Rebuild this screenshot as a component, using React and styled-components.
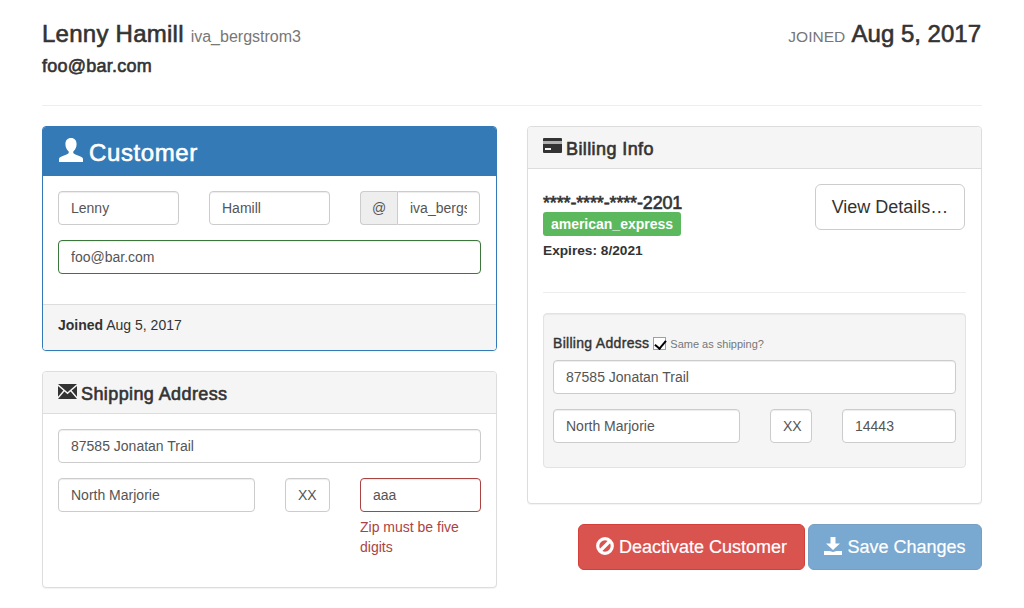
import React from 'react'
import styled, { createGlobalStyle, css } from 'styled-components'

const GlobalStyle = createGlobalStyle`
    * { box-sizing: border-box; }
    body {
        margin: 0;
        background: #fff;
        color: #333;
        font-family: "Liberation Sans", Arial, sans-serif;
        font-size: 14px;
        line-height: 20px;
    }
`

// the reference uses a medium weight, Liberation Sans only has regular and bold
const medium = css`
    font-weight: 400;
    -webkit-text-stroke: 0.6px currentColor;
`

function UserIcon() {
    return (
        <HeadIcon width="26" height="24" viewBox="0 0 26 24">
            <path fill="currentColor" d="M13 0c3.600 0 5.600 2.600 5.600 6 0 2.900-1.200 5.700-2.900 7.100-.6.5-.6 2 0 2.500.9.8 2.500 1.300 4.300 2 2.500 1 5 1.700 5 3.400V24H1v-3c0-1.700 2.500-2.400 5-3.400 1.800-.7 3.400-1.200 4.300-2 .6-.5.6-2 0-2.500C8.600 11.700 7.400 8.900 7.400 6 7.400 2.600 9.400 0 13 0z" />
        </HeadIcon>
    )
}

function EnvelopeIcon() {
    return (
        <SmallIcon width="19" height="17" viewBox="0 0 19 17">
            <path fill="currentColor" d="M0 1h19L9.500 9.200z M0 3l5.300 4.600L0 13.800z M19 3v10.800l-5.300-6.200z M6.400 8.600l3.100 2.700 3.100-2.700L19 16H0z" />
        </SmallIcon>
    )
}

function CardIcon() {
    return (
        <SmallIcon width="19" height="17" viewBox="0 0 19 17">
            <path fill="currentColor" d="M1 0h17a1 1 0 0 1 1 1v2H0V1a1 1 0 0 1 1-1z" />
            <rect y="3" width="19" height="3" fill="currentColor" opacity="0.35" />
            <path fill="currentColor" fillRule="evenodd" d="M0 6h19v8a1 1 0 0 1-1 1H1a1 1 0 0 1-1-1z M2 10v2h6v-2z" />
        </SmallIcon>
    )
}

function BanIcon() {
    return (
        <BtnIcon width="18" height="18" viewBox="0 0 18 18">
            <circle cx="9" cy="9" r="7.300" fill="none" stroke="currentColor" strokeWidth="3.200" />
            <path d="M4 14L14 4" stroke="currentColor" strokeWidth="3.200" />
        </BtnIcon>
    )
}

function DownloadIcon() {
    return (
        <BtnIcon width="18" height="18" viewBox="0 0 18 18">
            <path fill="currentColor" d="M6.500 0h5v6.500H16L9 13 2 6.500h4.500z M0 14h5.500L9 15l3.500-1H18v4H0z" />
        </BtnIcon>
    )
}

function App() {
    return (
        <Page>
            <GlobalStyle />
            <Header>
                <div>
                    <Name>Lenny Hamill <Username>iva_bergstrom3</Username></Name>
                    <HeaderEmail>foo@bar.com</HeaderEmail>
                </div>
                <JoinedLine><JoinedLabel>JOINED</JoinedLabel> Aug 5, 2017</JoinedLine>
            </Header>
            <Rule />
            <Columns>
                <Column>
                    <Panel primary>
                        <PrimaryHeading><UserIcon />Customer</PrimaryHeading>
                        <PanelBody>
                            <NameRow>
                                <Input defaultValue="Lenny" />
                                <Input defaultValue="Hamill" />
                                <InputGroup>
                                    <Addon>@</Addon>
                                    <GroupInput defaultValue="iva_bergstrom3" />
                                </InputGroup>
                            </NameRow>
                            <Input success defaultValue="foo@bar.com" />
                            <BodyGap />
                        </PanelBody>
                        <PanelFooter><strong>Joined</strong> Aug 5, 2017</PanelFooter>
                    </Panel>
                    <Panel>
                        <PanelHeading><EnvelopeIcon />Shipping Address</PanelHeading>
                        <PanelBody>
                            <Input defaultValue="87585 Jonatan Trail" />
                            <ShippingRow>
                                <Input defaultValue="North Marjorie" />
                                <StateInput defaultValue="XX" />
                                <div>
                                    <Input error defaultValue="aaa" />
                                    <ErrorText>Zip must be five digits</ErrorText>
                                </div>
                            </ShippingRow>
                        </PanelBody>
                    </Panel>
                </Column>
                <Column>
                    <Panel>
                        <PanelHeading><CardIcon />Billing Info</PanelHeading>
                        <BillingBody>
                            <CardRow>
                                <div>
                                    <CardNumber>****-****-****-2201</CardNumber>
                                    <CardLabel>american_express</CardLabel>
                                    <Expires>Expires: 8/2021</Expires>
                                </div>
                                <DetailsButton>View Details…</DetailsButton>
                            </CardRow>
                            <BodyRule />
                            <Well>
                                <AddressTitle>
                                    <AddressLabel>Billing Address</AddressLabel>
                                    <Check type="checkbox" defaultChecked />
                                    <SameText>Same as shipping?</SameText>
                                </AddressTitle>
                                <Input defaultValue="87585 Jonatan Trail" />
                                <BillingRow>
                                    <Input defaultValue="North Marjorie" />
                                    <StateInput defaultValue="XX" />
                                    <Input defaultValue="14443" />
                                </BillingRow>
                            </Well>
                        </BillingBody>
                    </Panel>
                    <Actions>
                        <DangerButton><BanIcon />Deactivate Customer</DangerButton>
                        <SaveButton disabled><DownloadIcon />Save Changes</SaveButton>
                    </Actions>
                </Column>
            </Columns>
        </Page>
    )
}

export default App

const Page = styled.div`
    width: 1024px;
    padding: 20px 42px 0;
`
const Header = styled.header`
    display: flex;
    justify-content: space-between;
    align-items: flex-start;
`
const Name = styled.h3`
    margin: 0;
    font-size: 24px;
    line-height: 27px;
    letter-spacing: 0.25px;
    ${medium}
`
const Username = styled.small`
    font-size: 16px;
    font-weight: 400;
    letter-spacing: 0;
    color: #777;
    -webkit-text-stroke: 0;
`
const HeaderEmail = styled.div`
    margin-top: 6px;
    font-size: 18px;
    line-height: 20px;
    letter-spacing: 0.25px;
    ${medium}
`
const JoinedLine = styled.div`
    padding-right: 1px;
    font-size: 24px;
    line-height: 27px;
    ${medium}
`
const JoinedLabel = styled.small`
    margin-right: 1px;
    font-size: 15.500px;
    color: #777;
    -webkit-text-stroke: 0;
`
const Rule = styled.hr`
    margin: 29px 0 20px;
    border: 0;
    border-top: 1px solid #eee;
`
const Columns = styled.div`
    display: grid;
    grid-template-columns: 455px 455px;
    gap: 30px;
`
const Column = styled.div`
    display: flex;
    flex-direction: column;
`
const Panel = styled.section`
    margin-bottom: 20px;
    background: #fff;
    border: 1px solid ${(props) => (props.primary ? '#337ab7' : '#ddd')};
    border-radius: 4px;
    box-shadow: 0 1px 1px rgba(0, 0, 0, 0.05);
`
const PanelHeading = styled.h3`
    display: flex;
    align-items: center;
    gap: 4px;
    height: 42px;
    margin: 0;
    padding: 2px 15px 0;
    font-size: 18px;
    line-height: 20px;
    letter-spacing: 0.4px;
    color: #333;
    background: #f5f5f5;
    border-bottom: 1px solid #ddd;
    border-radius: 3px 3px 0 0;
    ${medium}
`
const PrimaryHeading = styled(PanelHeading)`
    gap: 5px;
    height: 49px;
    font-size: 24px;
    letter-spacing: 0.6px;
    color: #fff;
    background: #337ab7;
    border-bottom: 0;
`
const HeadIcon = styled.svg`
    flex: none;
    margin-top: -6px;
`
const SmallIcon = styled.svg`
    flex: none;
    margin-top: -5px;
`
const BtnIcon = styled.svg`
    flex: none;
    margin-top: -3px;
`
const PanelBody = styled.div`
    padding: 15px;
`
const BillingBody = styled(PanelBody)`
    padding-bottom: 35px;
`
const PanelFooter = styled.div`
    height: 46px;
    padding: 10px 15px;
    background: #f5f5f5;
    border-top: 1px solid #ddd;
    border-radius: 0 0 3px 3px;
`
const Input = styled.input`
    display: block;
    width: 100%;
    min-width: 0;
    height: 34px;
    padding: 6px 12px;
    font-family: inherit;
    font-size: 14px;
    line-height: 20px;
    color: #555;
    background: #fff;
    border: 1px solid ${(props) => (props.success ? '#3c763d' : props.error ? '#a94442' : '#ccc')};
    border-radius: 4px;
    box-shadow: inset 0 1px 1px rgba(0, 0, 0, 0.075);
    outline: 0;
`
const StateInput = styled(Input)`
    padding-right: 0;
`
const NameRow = styled.div`
    display: grid;
    grid-template-columns: 121px 121px 120px;
    gap: 30px;
    margin-bottom: 15px;
`
const InputGroup = styled.div`
    display: flex;
`
const Addon = styled.span`
    flex: none;
    width: 37px;
    height: 34px;
    font-size: 14px;
    line-height: 32px;
    text-align: center;
    color: #555;
    background: #eee;
    border: 1px solid #ccc;
    border-right: 0;
    border-radius: 4px 0 0 4px;
`
const GroupInput = styled(Input)`
    flex: 1;
    border-radius: 0 4px 4px 0;
`
const BodyGap = styled.div`
    height: 15px;
`
const ShippingRow = styled.div`
    display: grid;
    grid-template-columns: 197px 45px 121px;
    gap: 30px;
    margin-top: 15px;
`
const ErrorText = styled.div`
    margin-top: 5px;
    margin-bottom: 15px;
    color: #a94442;
`
const CardRow = styled.div`
    display: flex;
    justify-content: space-between;
    align-items: flex-start;
`
const CardNumber = styled.div`
    margin-top: 9px;
    font-size: 18px;
    line-height: 20px;
    letter-spacing: -0.15px;
    ${medium}
`
const CardLabel = styled.span`
    display: block;
    width: 138px;
    height: 24px;
    margin-top: -1px;
    font-size: 14px;
    font-weight: 700;
    line-height: 24px;
    text-align: center;
    color: #fff;
    background: #5cb85c;
    border-radius: 3px;
`
const Expires = styled.div`
    margin-top: 5px;
    font-size: 13.700px;
    font-weight: 700;
`
const DetailsButton = styled.button`
    width: 150px;
    height: 46px;
    margin: 0 1px 0 0;
    padding: 0;
    font-family: inherit;
    font-size: 18px;
    color: #333;
    background: #fff;
    border: 1px solid #ccc;
    border-radius: 6px;
`
const BodyRule = styled.hr`
    margin: 31px 0 20px;
    border: 0;
    border-top: 1px solid #eee;
`
const Well = styled.div`
    height: 155px;
    padding: 19px 9px;
    background: #f5f5f5;
    border: 1px solid #e3e3e3;
    border-radius: 4px;
    box-shadow: inset 0 1px 1px rgba(0, 0, 0, 0.05);
`
const AddressTitle = styled.div`
    display: flex;
    align-items: center;
    height: 20px;
    margin-bottom: 7px;
`
const AddressLabel = styled.span`
    letter-spacing: 0.3px;
    -webkit-text-stroke: 0.4px currentColor;
`
const SameText = styled.small`
    margin-top: 2px;
    font-size: 11px;
    color: #777;
`
const Check = styled.input`
    position: relative;
    appearance: none;
    width: 13px;
    height: 13px;
    margin: 0 4px 0 4px;
    background: #fff;
    border: 1px solid #a0a0a0;
    &::after {
        content: '';
        position: absolute;
        left: 3px;
        top: 0;
        width: 5px;
        height: 9px;
        border: solid #000;
        border-width: 0 2px 2px 0;
        transform: rotate(40deg);
    }
`
const BillingRow = styled.div`
    display: grid;
    grid-template-columns: 187px 42px 114px;
    gap: 30px;
    margin-top: 15px;
`
const Actions = styled.div`
    display: flex;
    justify-content: flex-end;
    gap: 3px;
`
const ActionButton = styled.button`
    display: flex;
    align-items: center;
    justify-content: center;
    gap: 5px;
    height: 46px;
    padding: 0;
    font-family: inherit;
    font-size: 18px;
    color: #fff;
    border-radius: 6px;
    -webkit-text-stroke: 0.2px currentColor;
`
const DangerButton = styled(ActionButton)`
    width: 227px;
    background: #d9534f;
    border: 1px solid #d43f3a;
`
const SaveButton = styled(ActionButton)`
    width: 174px;
    background: #337ab7;
    border: 1px solid #2e6da4;
    opacity: 0.65;
`
